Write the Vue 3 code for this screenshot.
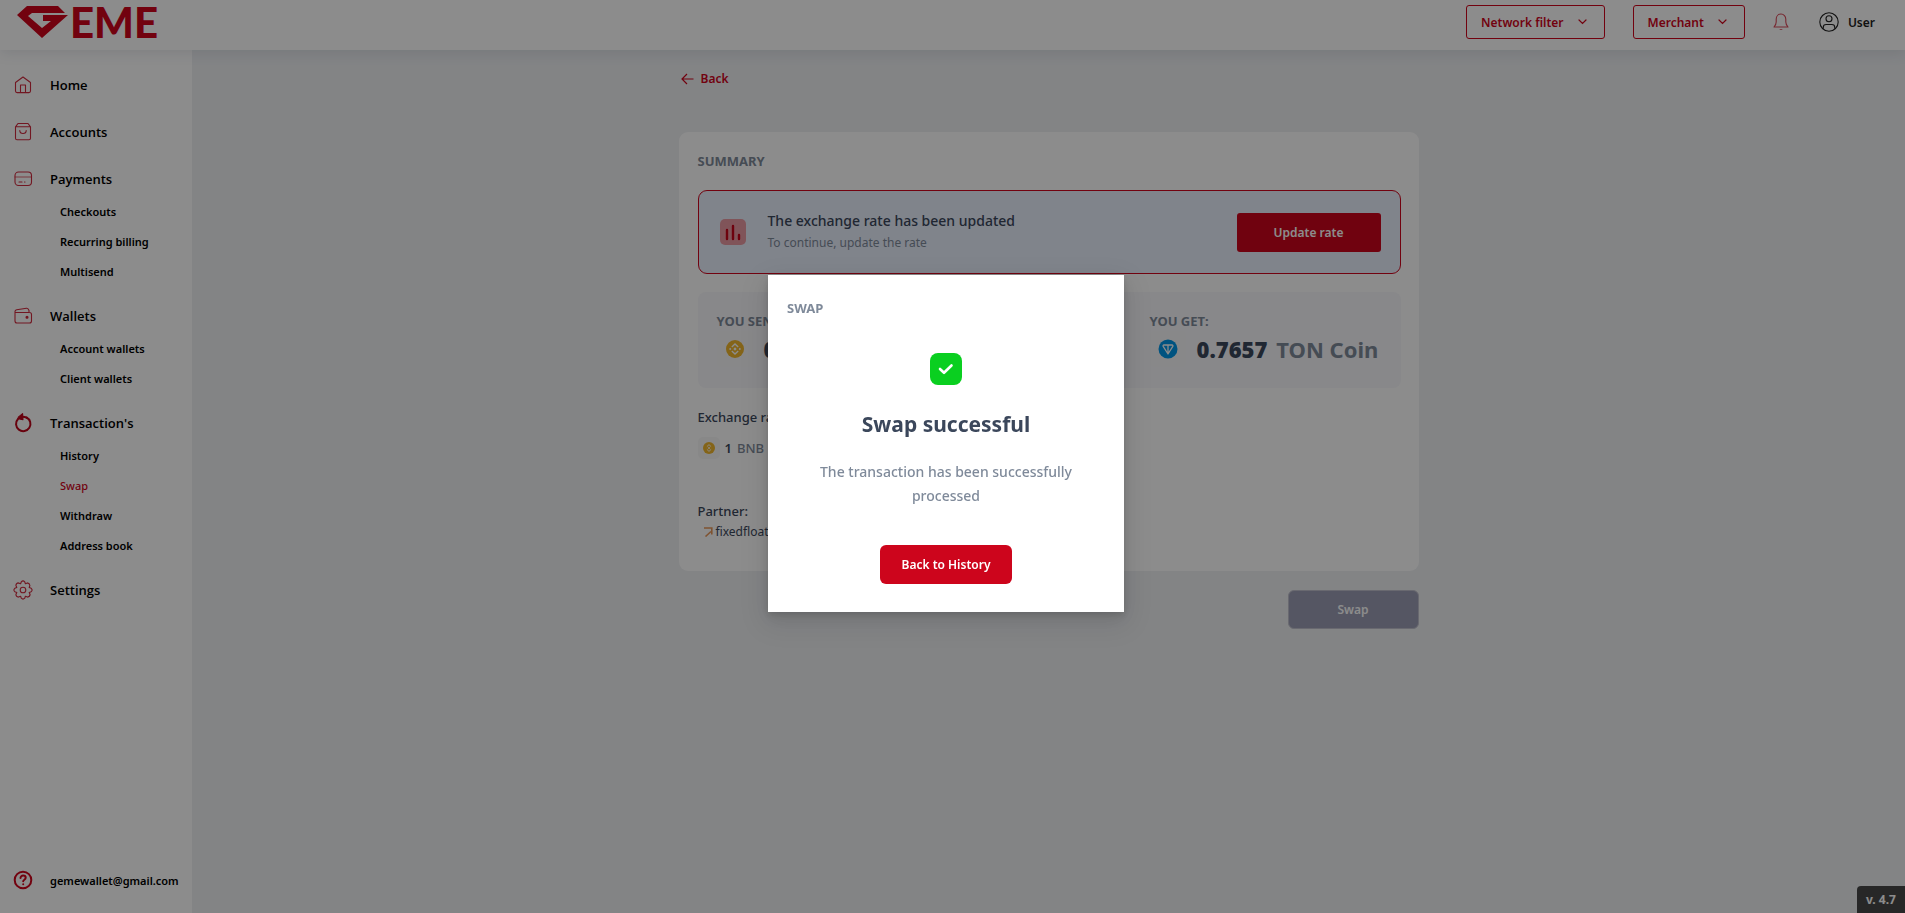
<script setup>
const nav = [
  { label: 'Home', icon: 'home', children: [] },
  { label: 'Accounts', icon: 'bag', children: [] },
  { label: 'Payments', icon: 'card', children: ['Checkouts', 'Recurring billing', 'Multisend'] },
  { label: 'Wallets', icon: 'wallet', children: ['Account wallets', 'Client wallets'] },
  { label: "Transaction's", icon: 'cycle', children: ['History', 'Swap', 'Withdraw', 'Address book'] },
  { label: 'Settings', icon: 'gear', children: [] },
]
const filters = ['Network filter', 'Merchant']
</script>

<template>
  <div class="page">
    <header class="topbar">
      <a href="#" class="logo" aria-label="GEME">
        <svg width="146" height="50" viewBox="0 0 146 50">
          <path d="M10 6h31l7 7H15l-4 3 14 12 9-7h-8v-6h25L25 38 0 15z" fill="#d0051c" />
          <text x="53" y="38" class="logo-text">EME</text>
        </svg>
      </a>
      <div class="tools">
        <button v-for="f in filters" :key="f" class="filter" type="button">
          {{ f }}
          <svg width="9" height="6" viewBox="0 0 9 6" fill="none" stroke="currentColor" stroke-width="1.2" stroke-linecap="round"><path d="M1 1l3.500 3.500L8 1" /></svg>
        </button>
        <button class="plain" type="button" aria-label="Notifications">
          <svg width="16" height="18" viewBox="0 0 16 18" fill="none" stroke="#d94a5a" stroke-width="1.1" stroke-linejoin="round">
            <path d="M1 14h14c-1.500-1.700-2.200-2.700-2.200-5V6.200C12.800 3.300 10.800 1 8 1S3.200 3.300 3.200 6.200V9c0 2.300-.7 3.300-2.200 5z" />
            <path d="M6.300 16.200c.8 1.200 2.600 1.200 3.400 0z" fill="#d94a5a" stroke="none" />
          </svg>
        </button>
        <button class="plain user" type="button">
          <svg width="20" height="20" viewBox="0 0 20 20" fill="none" stroke="#222" stroke-width="1.1">
            <circle cx="10" cy="10" r="9.200" /><circle cx="10" cy="6.800" r="3" />
            <path d="M4.300 16.800v-1.600c0-1.800 1.200-2.700 2.800-2.700h5.800c1.600 0 2.800.9 2.800 2.700v1.600" />
          </svg>
          User
        </button>
      </div>
    </header>

    <div class="body">
      <aside class="sidebar">
        <nav>
          <div v-for="item in nav" :key="item.label" class="group">
            <a href="#" class="item">
              <svg class="icon" viewBox="0 0 20 20" fill="none" stroke="#d02a3e" stroke-width="1.1" stroke-linecap="round" stroke-linejoin="round">
                <template v-if="item.icon === 'home'">
                  <path d="M2.500 7.500 10 2l7.500 5.500V16a1.600 1.600 0 0 1-1.600 1.600H4.100A1.600 1.600 0 0 1 2.500 16z" />
                  <path d="M7.500 17.500V10h5v7.500" />
                </template>
                <template v-else-if="item.icon === 'bag'">
                  <path d="M2.500 4.800 5 1.500h10l2.500 3.300v11.500a1.500 1.500 0 0 1-1.500 1.500H4a1.500 1.500 0 0 1-1.500-1.500zM2.500 4.800h15" />
                  <path d="M6.800 8.500c0 4 6.400 4 6.400 0" />
                </template>
                <template v-else-if="item.icon === 'card'">
                  <rect x="2" y="3" width="16.500" height="13.500" rx="3.500" />
                  <path d="M2 8h16.500" stroke-width=".7" /><path d="M6 13h3M11.500 13h.5" />
                </template>
                <template v-else-if="item.icon === 'wallet'">
                  <path d="M2 6.500h14.500a2 2 0 0 1 2 2V15a2 2 0 0 1-2 2H4a2 2 0 0 1-2-2V5.500c0-1 .7-1.500 1.700-1.700l9.800-1.500c1.500-.2 2 .6 2.500 2.200v2" />
                  <circle cx="14" cy="11.200" r="1" fill="#d0051c" />
                </template>
                <template v-else-if="item.icon === 'cycle'">
                  <path d="M13.500 4.500A7.200 7.200 0 1 1 5 6" stroke="#bd041a" stroke-width="2" />
                  <path d="M5.300 4.200 9.600.6l.4 6.200-5-1z" fill="#bd041a" stroke="#bd041a" /><path d="M9 3.800c2 0 3.500.2 5 1" stroke="#bd041a" stroke-width="2" />
                </template>
                <template v-else>
                  <path d="M8.300 1.800Q10 0 11.700 1.800L12.400 3.700 14.400 2.900Q16.600 3.200 16.900 5.500L16.200 7.500 18.200 8.300Q20 10 18.200 11.700L16.200 12.500 17.100 14.400Q16.900 16.800 14.500 17.100L12.400 16.300 11.700 18.200Q10 20 8.300 18.200L7.600 16.300 5.500 17.100Q3.100 16.900 2.900 14.500L3.800 12.500 1.800 11.700Q0 10 1.800 8.300L3.800 7.500 2.900 5.500Q3.100 3.100 5.500 2.900L7.600 3.700z" />
                  <circle cx="10" cy="10" r="2.800" />
                </template>
              </svg>
              {{ item.label }}
            </a>
            <a v-for="c in item.children" :key="c" href="#" class="sub" :class="{ active: c === 'Swap' }">{{ c }}</a>
          </div>
        </nav>
        <a href="mailto:gemewallet@gmail.com" class="item support">
          <svg class="icon" viewBox="0 0 20 20" fill="none" stroke="#d0051c" stroke-width="2" stroke-linecap="round">
            <circle cx="10" cy="10" r="8.300" /><path d="M7.500 8c0-3.300 5.200-3 5.200-.2 0 1.900-2.500 1.900-2.500 3.500" /><path d="M10.200 14.200v.1" />
          </svg>
          gemewallet@gmail.com
        </a>
      </aside>

      <main class="main">
        <div class="content">
          <a href="#" class="back">
            <svg width="13" height="12" viewBox="0 0 13 12" fill="none" stroke="currentColor" stroke-width="1.200"><path d="M12.500 6H1M6 1 1 6l5 5" /></svg>
            Back
          </a>
          <section class="card">
            <h2 class="caption">SUMMARY</h2>
            <div class="alert">
              <svg width="26" height="26" viewBox="0 0 26 26">
                <rect width="26" height="26" rx="5" fill="#ea9aa3" />
                <path d="M7 11v9M13 7v13M19 16v4" stroke="#c9041b" stroke-width="2.400" stroke-linecap="round" />
              </svg>
              <div class="alert-text">
                <strong>The exchange rate has been updated</strong>
                <span>To continue, update the rate</span>
              </div>
              <button class="btn update" type="button">Update rate</button>
            </div>
            <div class="amounts">
              <div class="side">
                <h3 class="caption">YOU SEND:</h3>
                <p class="amount">
                  <span class="coin">
                    <svg width="18" height="18" viewBox="0 0 18 18"><circle cx="9" cy="9" r="9" fill="#f0b62c" /><g fill="none" stroke="#fff" stroke-width="1.400"><path d="M5.800 7 9 3.900 12.200 7M5.800 11 9 14.100 12.200 11" /></g><path d="m9 7.300 1.700 1.700L9 10.700 7.300 9zM4.200 7.800 5.400 9l-1.200 1.200L3 9zM13.800 7.800 15 9l-1.200 1.200L12.600 9z" fill="#fff" /></svg>
                  </span>
                  <b>0.01</b> <span class="unit">BNB</span>
                </p>
              </div>
              <div class="side get">
                <h3 class="caption">YOU GET:</h3>
                <p class="amount">
                  <span class="coin">
                    <svg width="20" height="20" viewBox="0 0 20 20"><circle cx="10" cy="10" r="9.500" fill="#0098ea" /><path d="M6 6h8c.9 0 1.200.7.8 1.400L10 15 5.200 7.400C4.800 6.700 5.100 6 6 6zM10 6v9" fill="none" stroke="#fff" stroke-width="1.300" stroke-linejoin="round" /></svg>
                  </span>
                  <b>0.7657</b> <span class="unit">TON Coin</span>
                </p>
              </div>
            </div>
            <h3 class="label">Exchange rate:</h3>
            <p class="rate">
              <span class="coin small">
                <svg width="12" height="12" viewBox="0 0 18 18"><circle cx="9" cy="9" r="9" fill="#f0b62c" /><g fill="none" stroke="#fff" stroke-width="1.400"><path d="M5.800 7 9 3.900 12.200 7M5.800 11 9 14.100 12.200 11" /></g><path d="m9 7.300 1.700 1.700L9 10.700 7.300 9z" fill="#fff" /></svg>
              </span>
              <b>1</b> <span class="unit">BNB</span>
            </p>
            <h3 class="label partner-label">Partner:</h3>
            <p class="partner">
              <svg width="9" height="10" viewBox="0 0 9 10" fill="none" stroke="#e8985a" stroke-width="1.600"><path d="M0 1h7.800v6.500M7 4.500 1.500 9.500" /></svg>
              fixedfloat
            </p>
          </section>
          <div class="actions"><button class="btn swap" type="button" disabled>Swap</button></div>
        </div>
      </main>
    </div>

    <div class="version">v. 4.7</div>

    <div class="overlay">
      <div class="modal" role="dialog" aria-modal="true" aria-labelledby="modal-title">
        <h2 class="caption modal-caption">SWAP</h2>
        <svg class="check" width="32" height="32" viewBox="0 0 32 32"><rect width="32" height="32" rx="8" fill="#0acf20" /><path d="m10 16 4 3.800 7.500-7.300" fill="none" stroke="#fff" stroke-width="2.600" stroke-linecap="round" stroke-linejoin="round" /></svg>
        <h1 id="modal-title">Swap successful</h1>
        <p>The transaction has been successfully processed</p>
        <button class="btn history" type="button">Back to History</button>
      </div>
    </div>
  </div>
</template>

<style>
body { margin: 0; }
</style>

<style scoped>
* { box-sizing: border-box; }
h1, h2, h3, p { margin: 0; }
a { text-decoration: none; color: inherit; }
button { font: inherit; cursor: pointer; }
svg { display: block; flex: none; }
.page {
  min-height: 100vh;
  display: flex;
  flex-direction: column;
  font-family: "Noto Sans", "Open Sans", sans-serif;
  font-size: 13px;
  color: #3b475b;
  background: #eef0f3;
}
.topbar {
  position: relative;
  height: 50px;
  display: flex;
  justify-content: space-between;
  padding: 0 30px 0 17px;
  background: #fff;
  box-shadow: 0 4px 12px rgba(40, 60, 90, 0.1);
}
.logo-text { font: 900 42px Lato, sans-serif; fill: #d0051c; }
.tools { height: 44px; display: flex; align-items: center; font-size: 12px; font-weight: 600; }
.filter {
  height: 34px;
  display: flex;
  align-items: center;
  gap: 14px;
  margin-right: 28px;
  padding: 0 17px 0 14px;
  border: 1px solid #d0051c;
  border-radius: 3px;
  background: none;
  color: #d0051c;
}
.plain { display: flex; align-items: center; padding: 0; border: 0; background: none; }
.user { gap: 9px; margin-left: 30px; color: #222; }
.body { flex: 1; display: flex; }
.sidebar {
  width: 192px;
  flex: none;
  display: flex;
  flex-direction: column;
  justify-content: space-between;
  padding: 18px 0 16px;
  background: #fff;
  font-family: "Open Sans", sans-serif;
  font-weight: 600;
  color: #000;
}
nav { display: flex; flex-direction: column; gap: 13px; }
.item { height: 34px; display: flex; align-items: center; gap: 17px; padding-left: 13px; }
.icon { width: 20px; height: 20px; }
.sub { height: 30px; display: flex; align-items: center; padding-left: 60px; font-size: 11px; }
.sub, .support { font-family: "Noto Sans", sans-serif; }
.sub.active { color: #d0051c; font-weight: 500; }
.support { font-size: 11px; }
.main { flex: 1; display: flex; justify-content: center; padding: 0 20px; }
.content { width: 740px; }
.back {
  height: 82px;
  display: flex;
  align-items: flex-start;
  gap: 7px;
  padding: 20px 0 0 2px;
  font-size: 12px;
  line-height: 18px;
  font-weight: 600;
  color: #d0051c;
}
.back svg { margin-top: 3px; }
.card { padding: 19px 18px 28px 19px; border-radius: 9px; background: #fff; }
.caption { font-size: 13px; line-height: 20px; font-weight: 700; color: #7f8a9a; }
.alert {
  height: 84px;
  display: flex;
  align-items: center;
  margin-top: 19px;
  padding: 0 19px 0 21px;
  border: 1px solid #d0051c;
  border-radius: 9px;
  background: #e9f0fe;
}
.alert-text { flex: 1; display: flex; flex-direction: column; margin-left: 22px; color: #7f8a9a; }
.alert-text strong { font-size: 14px; line-height: 22px; font-weight: 500; color: #3b475b; }
.alert-text span { font-size: 12px; line-height: 22px; }
.btn { border: 0; color: #fff; font-size: 12px; font-weight: 600; background: #cd051c; }
.update { width: 144px; height: 39px; border-radius: 3px; }
.amounts {
  height: 96px;
  display: flex;
  margin-top: 18px;
  padding: 19px;
  border-radius: 8px;
  background: #f7f7fb;
}
.side { flex: 1; }
.get { flex: none; width: 232px; }
.amount { display: flex; align-items: center; height: 36px; font-size: 22px; font-weight: 700; color: #3b475b; }
.amount b { margin: 0 9px 0 11px; }
.unit { color: #7f8a9a; }
.coin { width: 36px; height: 36px; display: grid; place-items: center; border-radius: 5px; background: #f8f8f9; }
.small { width: 22px; height: 22px; background: #f8f8f8; }
.label { margin-top: 19px; font-size: 13px; line-height: 20px; font-weight: 500; }
.rate { height: 22px; display: flex; align-items: center; margin-top: 10px; font-weight: 500; }
.rate b { margin: 0 5px; font-weight: 600; }
.partner-label { margin-top: 42px; }
.partner { display: flex; align-items: center; gap: 3px; padding-left: 6px; font-size: 12px; line-height: 22px; }
.actions { display: flex; justify-content: flex-end; margin-top: 19px; }
.swap { width: 131px; height: 39px; border: 1px solid #c0c0cc; border-radius: 6px; background: #9b9db5; }
.version {
  position: fixed;
  right: 0;
  bottom: 0;
  width: 48px;
  line-height: 27px;
  padding-left: 9px;
  border-radius: 4px 0 0 0;
  background: #484848;
  color: #fff;
  font-size: 12px;
  font-weight: 700;
}
.overlay {
  position: fixed;
  inset: 0;
  display: flex;
  align-items: center;
  justify-content: center;
  padding: 0 13px 26px 0;
  background: rgba(0, 0, 0, 0.45);
}
.modal {
  width: 356px;
  display: flex;
  flex-direction: column;
  align-items: center;
  padding: 23px 19px 28px;
  background: #fff;
  box-shadow: 0 6px 16px rgba(0, 0, 0, 0.08), 0 3px 6px rgba(0, 0, 0, 0.12), 0 9px 28px 8px rgba(0, 0, 0, 0.08);
}
.modal-caption { align-self: flex-start; }
.check { margin-top: 35px; }
h1 { margin-top: 23px; font-size: 21px; line-height: 32px; font-weight: 700; }
.modal p { margin-top: 20px; padding: 0 24px; font-size: 14px; line-height: 24px; font-weight: 500; text-align: center; color: #7f8a9a; }
.history { width: 132px; height: 39px; margin-top: 37px; border-radius: 6px; }
</style>
